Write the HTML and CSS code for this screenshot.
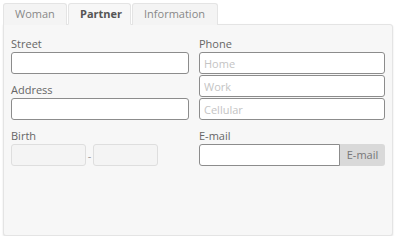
FILE: index.html
```html
<!DOCTYPE html>
<html lang="en">

<head>
    <title>Partner</title>
    <link rel="stylesheet" href="styles.css">
</head>

<body>
    <div class="tabs">
        <div class="tab">Woman</div>
        <div class="tab active">Partner</div>
        <div class="tab">Information</div>
    </div>
    <div class="panel">
        <div class="col left">
            <div class="field">
                <label>Street</label>
                <input type="text">
            </div>
            <div class="field">
                <label>Address</label>
                <input type="text">
            </div>
            <div class="field">
                <label>Birth</label>
                <div class="birth">
                    <input type="text" class="day" disabled>
                    <span class="dash">-</span>
                    <input type="text" class="year" disabled>
                </div>
            </div>
        </div>
        <div class="col right">
            <div class="field">
                <label>Phone</label>
                <div class="phones">
                    <input type="text" placeholder="Home">
                    <input type="text" placeholder="Work">
                    <input type="text" placeholder="Cellular">
                </div>
            </div>
            <div class="field">
                <label>E-mail</label>
                <div class="group">
                    <input type="text">
                    <span class="addon">E-mail</span>
                </div>
            </div>
        </div>
    </div>
</body>

</html>
```

FILE: styles.css
```css
body {
    margin: 0;
    padding: 3px 3px 0 3px;
    background-color: #fff;
    font-family: "Open Sans", sans-serif;
    font-size: 11px;
    color: #555;
}

.tabs {
    display: flex;
    height: 21px;
    position: relative;
    z-index: 1;
}

.tab {
    box-sizing: border-box;
    height: 22px;
    line-height: 20px;
    padding: 0 11px;
    color: #888;
    background-color: #f4f4f4;
    border: 1px solid #e4e4e4;
    border-bottom: 0;
    border-radius: 3px 3px 0 0;
    margin-right: 1px;
}

.tab:nth-child(1) {
    width: 64px;
}

.tab:nth-child(2) {
    width: 63px;
}

.tab:nth-child(3) {
    width: 86px;
}

.tab.active {
    background-color: #f7f7f7;
    color: #555;
    font-weight: bold;
    border-bottom: 1px solid #f7f7f7;
}

.panel {
    box-sizing: border-box;
    height: 212px;
    background-color: #f7f7f7;
    border: 1px solid #e4e4e4;
    border-radius: 0 3px 3px 3px;
    box-shadow: 0 1px 2px rgba(0, 0, 0, 0.12);
    padding: 12px 7px 0 7px;
    display: flex;
    gap: 10px;
}

.col {
    display: flex;
    flex-direction: column;
    gap: 9px;
}

.left {
    width: 178px;
}

.right {
    width: 186px;
}

.field label {
    display: block;
    line-height: 14px;
    margin-bottom: 1px;
    color: #666;
}

input {
    box-sizing: border-box;
    display: block;
    width: 100%;
    height: 22px;
    margin: 0;
    padding: 0 4px;
    border: 1px solid #8c8c8c;
    border-radius: 3px;
    background-color: #fff;
    font-family: "Open Sans", sans-serif;
    font-size: 11px;
    color: #555;
}

input::placeholder {
    color: #c4c4c4;
}

input:disabled {
    background-color: #f4f4f4;
    border-color: #dedede;
}

.phones {
    display: flex;
    flex-direction: column;
    gap: 1px;
}

.birth {
    display: flex;
    align-items: center;
}

.birth .day {
    width: 75px;
}

.birth .year {
    width: 65px;
}

.dash {
    width: 7px;
    text-align: center;
    color: #999;
}

.group {
    display: flex;
}

.group input {
    width: 141px;
    border-radius: 3px 0 0 3px;
}

.addon {
    width: 45px;
    height: 22px;
    line-height: 22px;
    text-align: center;
    background-color: #d9d9d9;
    color: #777;
    border-radius: 0 3px 3px 0;
}
```
